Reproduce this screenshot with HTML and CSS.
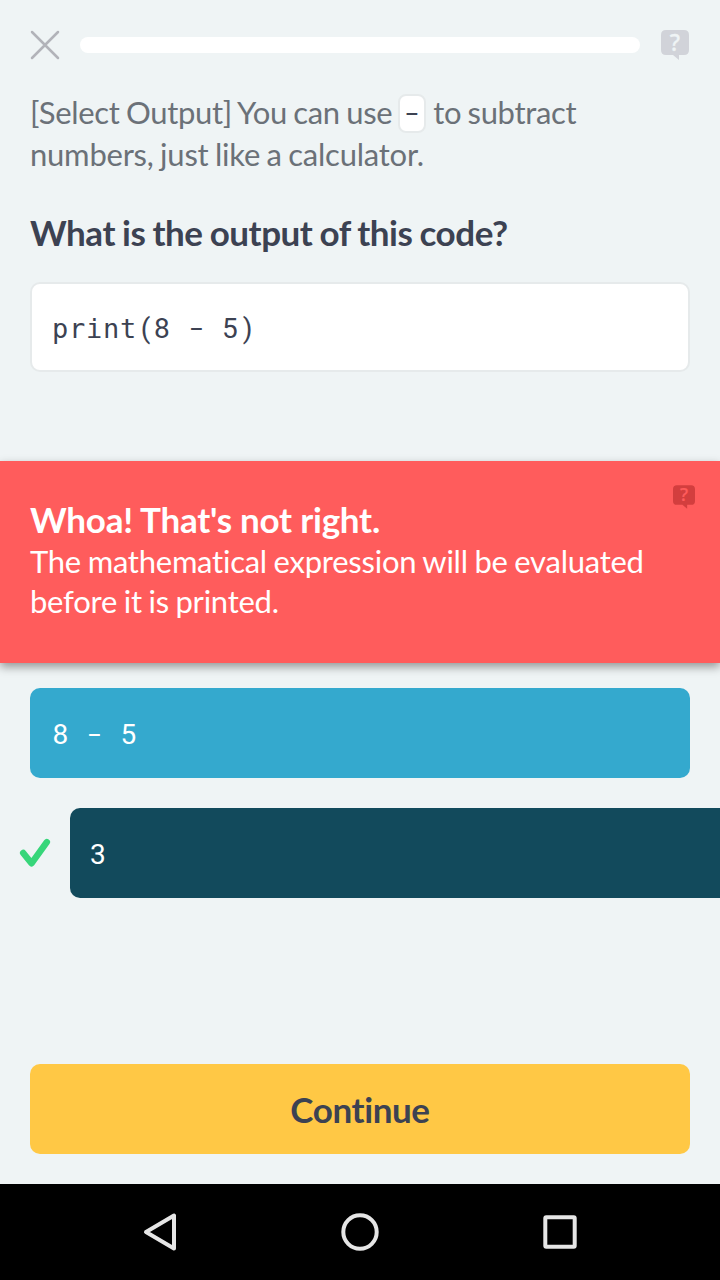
FILE: index.html
```html
<!DOCTYPE html>
<html lang="en">
<head>
<meta charset="utf-8">
<meta name="viewport" content="width=device-width">
<title>Quiz</title>
<link rel="stylesheet" href="styles.css">
</head>
<body>
<div class="screen">
  <header class="topbar">
    <svg class="close" width="30" height="30" viewBox="0 0 30 30"><path d="M2 2 28 28M28 2 2 28"/></svg>
    <div class="progress"></div>
    <svg class="help" width="28" height="30" viewBox="0 0 28 30"><path d="M5 0H23Q28 0 28 5V20Q28 25 23 25H18V30L12 25H5Q0 25 0 20V5Q0 0 5 0Z"/><text x="14" y="20.5">?</text></svg>
  </header>
  <main class="question">
    <p class="intro"><span class="first">[Select Output] You can use</span> <code class="chip"><span class="dash">-</span></code> <span class="first">to subtract</span><br><span class="second">numbers, just like a calculator.</span></p>
    <h1 class="title">What is the output of this code?</h1>
    <pre class="code"><span class="word">print</span><span class="mono"><span class="cell">(</span>8 <span class="cell dash">-</span> 5<span class="cell">)</span></span></pre>
  </main>
  <section class="feedback">
    <div class="message">
      <h2 class="verdict">Whoa! That's not right.</h2>
      <p class="explain">The mathematical expression will be evaluated<br>before it is printed.</p>
    </div>
    <svg class="help help-red" width="22" height="24" viewBox="0 0 28 30"><path d="M5 0H23Q28 0 28 5V20Q28 25 23 25H18V30L12 25H5Q0 25 0 20V5Q0 0 5 0Z"/><text x="14" y="20.5">?</text></svg>
  </section>
  <section class="answers">
    <div class="answer selected"><span class="mono">8 <span class="cell dash">-</span> 5</span></div>
    <div class="row">
      <svg class="check" width="30" height="28" viewBox="0 0 30 28"><path d="M3.200 14 11.5 24.300 26.800 3.200"/></svg>
      <div class="answer correct"><span class="mono">3</span></div>
    </div>
  </section>
  <div class="action"><button class="continue">Continue</button></div>
  <nav class="navbar">
    <svg width="40" height="40" viewBox="0 0 40 40"><path d="M34 3.5V36.500L6 20Z"/></svg>
    <svg width="40" height="40" viewBox="0 0 40 40"><circle cx="20" cy="20" r="16.700"/></svg>
    <svg width="40" height="40" viewBox="0 0 40 40"><rect x="5.300" y="5.300" width="29.400" height="29.400" rx="1"/></svg>
  </nav>
</div>
</body>
</html>
```
FILE: styles.css
```css
* { box-sizing: border-box; }
body { margin: 0; background: #eff4f5; font-family: Lato, sans-serif; font-variant-ligatures: none; }
h1, h2, p, pre { margin: 0; }
svg { display: block; flex: none; overflow: visible; }
.screen { width: 720px; height: 1280px; display: flex; flex-direction: column; overflow: hidden; }
.topbar { height: 90px; flex: none; display: flex; align-items: center; padding: 0 31px 0 30px; gap: 20px; }
.close path { fill: none; stroke: #b2b3b9; stroke-width: 2.5; stroke-linecap: round; }
.progress { width: 560px; height: 16px; border-radius: 8px; background: #fff; }
.help { fill: #d1d3d9; margin-left: 1px; }
.help text { fill: #eff4f5; stroke: #eff4f5; stroke-width: .3; font: 500 23px "Noto Sans", sans-serif; text-anchor: middle; }
.question { height: 371px; flex: none; padding: 1px 30px 0; }
.intro { height: 84px; font-size: 31px; line-height: 42px; color: #6b7178; white-space: nowrap; }
.first { letter-spacing: -.33px; word-spacing: -1.2px; }
.second { letter-spacing: -.23px; word-spacing: -1.2px; }
.chip { display: inline-block; width: 28px; height: 39px; border: 2px solid #e6eaeb; border-radius: 8px; background: #fff; color: #3c4252; font: 28px/36px Roboto, sans-serif; text-align: center; vertical-align: middle; margin: -7px -1px -2px -2px; }
.dash { display: inline-block; transform: translateY(-.7px) scaleX(1.6); }
.title { margin-top: 36px; font-size: 35px; line-height: 42px; font-weight: 700; color: #3c4252; white-space: nowrap; letter-spacing: -.45px; word-spacing: -1px; }
.code { margin-top: 29px; height: 90px; border: 2px solid #e6eaeb; border-radius: 10px; background: #fff; padding: 0 20px; line-height: 90px; color: #3c4252; }
.mono { font-family: Roboto, sans-serif; font-size: 28px; letter-spacing: 1.3px; word-spacing: 8.700px; }
.cell { display: inline-block; width: 17px; text-align: center; letter-spacing: 0; }
.word { font-family: "DejaVu Sans Mono", monospace; font-size: 27px; letter-spacing: .75px; }
.feedback { height: 202px; flex: none; background: #ff5c5c; color: #fff; display: flex; justify-content: space-between; align-items: flex-start; padding: 24px 25px 0 30px; box-shadow: 0 4px 9px rgba(0,0,0,.38); }
.message { padding-top: 13px; }
.verdict { font-size: 35px; line-height: 42px; letter-spacing: -.24px; }
.explain { margin-top: 1px; font-size: 31px; line-height: 40px; white-space: nowrap; letter-spacing: -.25px; word-spacing: -1px; }
.help-red { fill: #d33e3e; }
.help-red text { fill: #ff5c5c; stroke: #ff5c5c; }
.answers { height: 401px; flex: none; padding: 25px 0 0 30px; display: flex; flex-direction: column; gap: 30px; }
.answer { height: 90px; line-height: 94px; border-radius: 10px; color: #fff; padding-left: 20px; }
.selected { width: 660px; background: #34a9ce; padding-left: 22.5px; }
.row { display: flex; align-items: center; gap: 20px; margin-left: -10px; }
.correct { flex: 1; background: #124a5c; border-radius: 10px 0 0 10px; }
.check path { fill: none; stroke: #37d67a; stroke-width: 6.500; stroke-linecap: round; stroke-linejoin: round; }
.action { height: 120px; flex: none; padding: 0 30px; }
.continue { display: block; width: 660px; height: 90px; border: 0; border-radius: 10px; background: #ffc845; color: #3c4252; font: 700 35px Lato, sans-serif; font-variant-ligatures: none; letter-spacing: -.4px; padding: 0; }
.navbar { height: 96px; flex: none; background: #000; display: flex; justify-content: center; align-items: center; gap: 160px; }
.navbar svg { fill: none; stroke: #e6e6e6; stroke-width: 4; stroke-linejoin: round; }
```
